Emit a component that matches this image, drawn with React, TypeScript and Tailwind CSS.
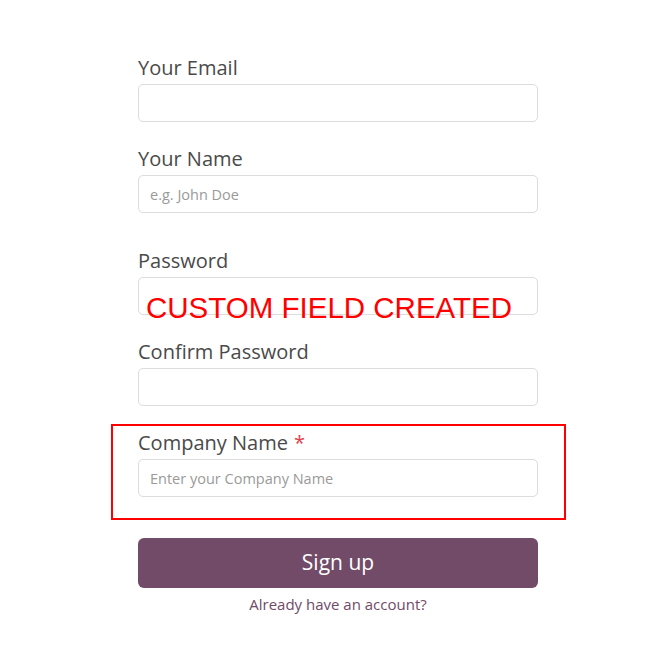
import React from "react";

const font = { fontFamily: '"Open Sans", "Noto Sans", sans-serif' } as React.CSSProperties;

function Field({ label, placeholder, required }: { label: string; placeholder?: string; required?: boolean }) {
  return (
    <div className="flex flex-col">
      <label className="text-[20px] leading-[28px] h-[28px] text-[#4a4a4a] mb-[2px]">
        {label}
        {required && <span className="text-[#e0424e] ml-[6px]">*</span>}
      </label>
      <input
        className="h-[38px] w-full rounded-[5px] border border-[#dcdcdc] bg-white px-[11px] text-[14.5px] text-[#333] placeholder:text-[#9a9a9a] outline-none"
        placeholder={placeholder}
        style={font}
      />
    </div>
  );
}

export default function App() {
  return (
    <div className="w-[670px] h-[670px] bg-white relative" style={font}>
      <div className="w-[400px] ml-[138px] pt-[54px] flex flex-col">
        <Field label="Your Email" />
        <div className="h-[23px]" />
        <Field label="Your Name" placeholder="e.g. John Doe" />
        <div className="h-[34px]" />
        <Field label="Password" />
        <div className="h-[23px]" />
        <Field label="Confirm Password" />
        <div className="h-[23px]" />
        <div className="relative">
          <Field label="Company Name" placeholder="Enter your Company Name" required />
          <div className="absolute left-[-27px] right-[-28px] top-[-5px] bottom-[-23px] border-[2px] border-[#ff0000] pointer-events-none" />
        </div>
        <button className="mt-[41px] h-[50px] w-full rounded-[6px] bg-[#714b67] text-white text-[21px]" style={font}>
          Sign up
        </button>
        <div className="mt-[5px] text-center text-[15px] text-[#714b67]">Already have an account?</div>
      </div>
      <div
        className="absolute left-[146px] top-[290px] text-[#ff0000] text-[29.5px] leading-[36px] whitespace-nowrap"
        style={{ fontFamily: '"Liberation Sans", Arial, sans-serif' }}
      >
        CUSTOM FIELD CREATED
      </div>
    </div>
  );
}
